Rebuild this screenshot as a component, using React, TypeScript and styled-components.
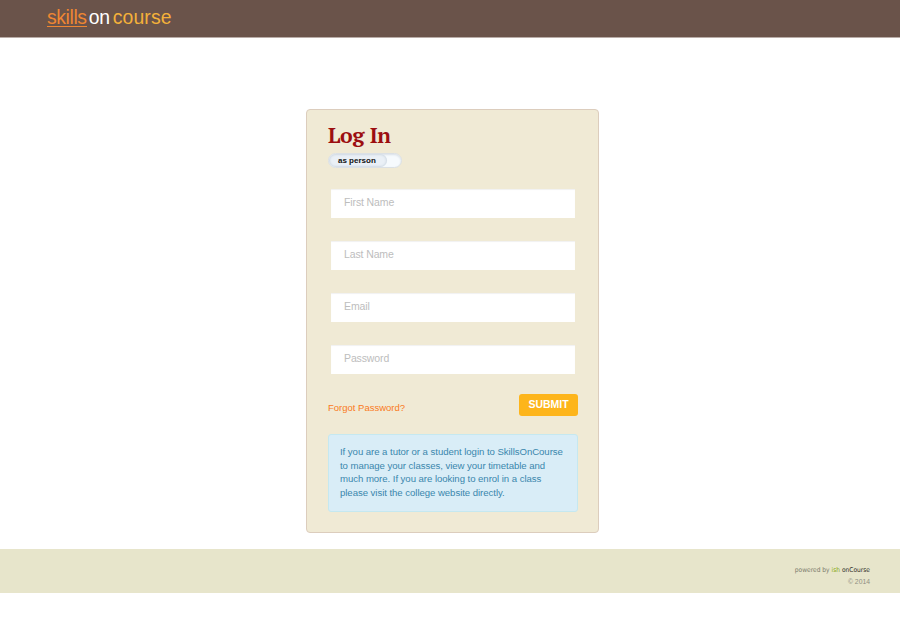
import React from "react";
import styled, { createGlobalStyle } from "styled-components";

const GlobalStyle = createGlobalStyle`
  * { box-sizing: border-box; }
  body {
    margin: 0;
    background: #fff;
    font-family: "Liberation Sans", Arial, sans-serif;
  }
`;

const Header = styled.header`
  height: 38px;
  padding: 6px 0 0 47px;
  background: #6a534a;
  border-bottom: 1px solid #b9aca7;
`;

const Logo = styled.div`
  display: flex;
  align-items: flex-start;
  font-size: 19.4px;
  line-height: 22px;
`;

const LogoWord = styled.span<{ $color: string; $gap?: number; $spacing?: number; $underlined?: boolean }>`
  height: 21px;
  margin-left: ${(p) => p.$gap ?? 0}px;
  color: ${(p) => p.$color};
  letter-spacing: ${(p) => p.$spacing ?? 0}px;
  border-bottom: ${(p) => (p.$underlined ? `1px solid ${p.$color}` : "0")};
`;

const Main = styled.main`
  display: flex;
  justify-content: center;
  height: 511px;
  padding: 71px 0 0 5px;
`;

const Card = styled.form`
  display: flex;
  flex-direction: column;
  width: 293px;
  height: 424px;
  padding: 13px 20px 0 21px;
  background: #f0ead5;
  border: 1px solid #dccdbd;
  border-radius: 4px;
`;

const Title = styled.h1`
  margin: 0;
  height: 30px;
  color: #9c0e10;
  font: bold 21.3px/25px "PT Serif", "Liberation Serif", serif;
  letter-spacing: -0.3px;
`;

const Toggle = styled.div`
  width: 74px;
  height: 15px;
  border: 1px solid #dbe0e4;
  border-radius: 8px;
  background: #f6fafd;
  box-shadow: inset 0 1px 2px #d9e0e8;
`;

const ToggleThumb = styled.span`
  display: block;
  width: 58px;
  height: 13px;
  padding-left: 9px;
  border-radius: 7px;
  background: #eaf0f6;
  box-shadow: inset 0 0 2px 1px #d0dae3;
  color: #111;
  font-size: 8px;
  font-weight: bold;
  line-height: 13px;
  white-space: nowrap;
`;

const Fields = styled.div`
  display: flex;
  flex-direction: column;
  gap: 23px;
  padding: 21px 2px 0 3px;
`;

const Input = styled.input`
  width: 244px;
  height: 29px;
  padding: 0 13px 3px;
  border: 0;
  border-radius: 0;
  outline: 0;
  background: #fff;
  box-shadow: inset 0 1px 1px #f1f1f1;
  font: 10.5px "Liberation Sans", Arial, sans-serif;
  letter-spacing: -0.12px;
  &::placeholder { color: #bdbdbd; opacity: 1; }
`;

const Actions = styled.div`
  display: flex;
  justify-content: space-between;
  height: 60px;
  padding-top: 20px;
`;

const ForgotLink = styled.a`
  margin-top: 8px;
  color: #fa7a1c;
  font-size: 9.5px;
  line-height: 12px;
  text-decoration: none;
`;

const Submit = styled.button`
  width: 59px;
  height: 22px;
  padding: 0 0 2px;
  border: 0;
  border-radius: 3px;
  background: #fdb51b;
  color: #fff;
  font: bold 10.5px/20px "Liberation Sans", Arial, sans-serif;
`;

const Notice = styled.p`
  margin: 0;
  height: 78px;
  padding: 10px 0 0 11px;
  border: 1px solid #c5e8f0;
  border-radius: 3px;
  background: #d9edf7;
  color: #3a87ad;
  font-size: 9.6px;
  line-height: 13.7px;
  letter-spacing: -0.05px;
  white-space: nowrap;
`;

const Footer = styled.footer`
  height: 44px;
  padding: 16px 30px 0 0;
  background: #e7e5cb;
  color: #8f8f82;
  font-size: 6.8px;
  line-height: 11px;
  text-align: right;
`;

const Powered = styled.div`
  color: #7c7b6c;
  font-family: "DejaVu Sans Condensed", "DejaVu Sans", sans-serif;
  font-size: 6.6px;
`;

const Brand = styled.span<{ $color: string }>`
  color: ${(p) => p.$color};
`;

const fields = [
  { label: "First Name", type: "text" },
  { label: "Last Name", type: "text" },
  { label: "Email", type: "email" },
  { label: "Password", type: "password" },
];

export default function App() {
  return (
    <>
      <GlobalStyle />
      <Header>
        <Logo>
          <LogoWord $color="#ef8632" $spacing={-0.4} $underlined>skills</LogoWord>
          <LogoWord $color="#ffffff" $gap={2} $spacing={-0.2}>on</LogoWord>
          <LogoWord $color="#f4b13a" $gap={3} $spacing={0.1}>course</LogoWord>
        </Logo>
      </Header>
      <Main>
        <Card>
          <Title>Log In</Title>
          <Toggle><ToggleThumb>as person</ToggleThumb></Toggle>
          <Fields>
            {fields.map((f) => (
              <Input key={f.label} type={f.type} placeholder={f.label} />
            ))}
          </Fields>
          <Actions>
            <ForgotLink href="#">Forgot Password?</ForgotLink>
            <Submit type="button">SUBMIT</Submit>
          </Actions>
          <Notice>
            If you are a tutor or a student login to SkillsOnCourse<br />
            to manage your classes, view your timetable and<br />
            much more. If you are looking to enrol in a class<br />
            please visit the college website directly.
          </Notice>
        </Card>
      </Main>
      <Footer>
        <Powered>
          powered by <Brand $color="#86a813">ish</Brand> <Brand $color="#2e2e28">onCourse</Brand>
        </Powered>
        <div>© 2014</div>
      </Footer>
    </>
  );
}
